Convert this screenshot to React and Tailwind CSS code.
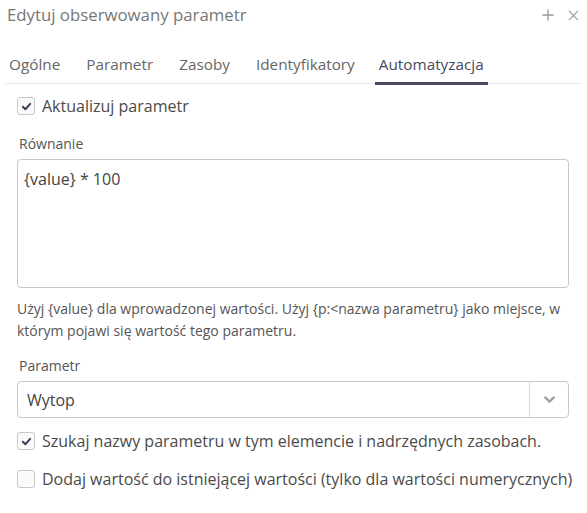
import React from 'react';

const Check = () => (
  <svg viewBox="0 0 12 12" className="w-[11px] h-[11px]">
    <path d="M2 6.3 L4.8 9 L10 3.2" fill="none" stroke="#3d3f5c" strokeWidth="2.2" strokeLinecap="round" strokeLinejoin="round" />
  </svg>
);

const Checkbox = ({ checked, label }) => (
  <label className="flex items-center gap-[7px] whitespace-nowrap">
    <span className="w-[18px] h-[18px] shrink-0 rounded-[3px] border border-[#c8c8c8] bg-[#fafafa] flex items-center justify-center">
      {checked && <Check />}
    </span>
    <span className="text-[16px] text-[#4a4a4a]">{label}</span>
  </label>
);

const tabs = ['Ogólne', 'Parametr', 'Zasoby', 'Identyfikatory', 'Automatyzacja'];
const tabGap = ['ml-[4px]', 'ml-[26px]', 'ml-[26px]', 'ml-[26px]', 'ml-[20px]'];

export default function App() {
  return (
    <div className="w-[587px] h-[513px] bg-white font-['Open_Sans',sans-serif] text-[#4a4a4a]">
      <div className="flex items-center justify-between pl-[7px] pr-[8px] h-[30px]">
        <span className="text-[16.8px] text-[#777]">Edytuj obserwowany parametr</span>
        <div className="flex items-center gap-[14px]">
          <svg viewBox="0 0 12 12" className="w-[12px] h-[12px]">
            <path d="M6 0.5 V11.5 M0.5 6 H11.5" stroke="#999" strokeWidth="1.3" />
          </svg>
          <svg viewBox="0 0 12 12" className="w-[11px] h-[11px]">
            <path d="M1 1 L11 11 M11 1 L1 11" stroke="#999" strokeWidth="1.3" />
          </svg>
        </div>
      </div>
      <div className="ml-[5px] mr-[7px] mt-[23px] flex border-b border-[#e6e6e6] h-[31px]">
        {tabs.map((t, i) => (
          <div
            key={t}
            className={
              tabGap[i] +
              (i === 4
                ? ' px-[4px] text-[15.3px] text-[#4a4a5e] border-b-[3px] border-[#4a4a5e] -mb-[2px]'
                : ' text-[15.3px] text-[#666]')
            }
          >
            {t}
          </div>
        ))}
      </div>
      <div className="pl-[17px] pr-[10px] pt-[10px] flex flex-col">
        <Checkbox checked label="Aktualizuj parametr" />
        <span className="text-[14px] text-[#555] mt-[15px] ml-[2px]">Równanie</span>
        <div className="mt-[5px] mr-[8px] h-[129px] border border-[#c8c8c8] rounded-[4px] px-[6px] pt-[7px] text-[16px] text-[#444]">
          {'{value} * 100'}
        </div>
        <p className="text-[14px] leading-[22px] text-[#555] mt-[10px] mr-[8px]">
          Użyj {'{value}'} dla wprowadzonej wartości. Użyj {'{p:<nazwa parametru}'} jako miejsce, w którym pojawi się wartość tego parametru.
        </p>
        <span className="text-[14px] text-[#555] mt-[13px] ml-[2px]">Parametr</span>
        <div className="mt-[5px] mr-[8px] h-[37px] border border-[#c8c8c8] rounded-[4px] flex items-stretch">
          <span className="flex-1 flex items-center pl-[9px] text-[16px] text-[#444]">Wytop</span>
          <span className="w-[39px] border-l border-[#d8d8d8] flex items-center justify-center">
            <svg viewBox="0 0 12 8" className="w-[13px] h-[9px]">
              <path d="M1.5 1.5 L6 6 L10.5 1.5" fill="none" stroke="#a0a0a0" strokeWidth="2.2" />
            </svg>
          </span>
        </div>
        <div className="mt-[11px]">
          <Checkbox checked label="Szukaj nazwy parametru w tym elemencie i nadrzędnych zasobach." />
        </div>
        <div className="mt-[14px]">
          <Checkbox label="Dodaj wartość do istniejącej wartości (tylko dla wartości numerycznych)" />
        </div>
      </div>
    </div>
  );
}
